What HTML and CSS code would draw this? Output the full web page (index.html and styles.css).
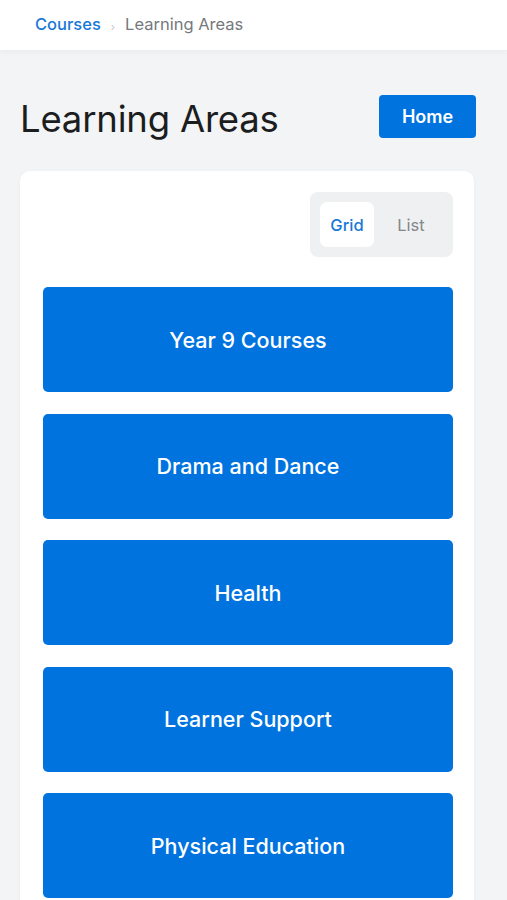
FILE: index.html
```html
<!DOCTYPE html>
<html lang="en">
<head>
  <meta charset="UTF-8" />
  <meta name="viewport" content="width=device-width, initial-scale=1.0"/>
  <title>Learning Areas</title>
  <link rel="stylesheet" href="styles.css">
</head>
<body>
  <header class="topbar">
    <nav class="crumbs">
      <a class="crumb-link" href="#">Courses</a>
      <span class="crumb-sep">›</span>
      <span class="crumb-current">Learning Areas</span>
    </nav>
  </header>

  <main class="page">
    <div class="page-head">
      <h1 class="title">Learning Areas</h1>
      <button class="home-btn">Home</button>
    </div>

    <section class="card">
      <div class="toolbar">
        <div class="toggle">
          <button class="toggle-btn active">Grid</button>
          <button class="toggle-btn">List</button>
        </div>
      </div>

      <div class="tiles">
        <a class="tile" href="#">Year 9 Courses</a>
        <a class="tile" href="#">Drama and Dance</a>
        <a class="tile" href="#">Health</a>
        <a class="tile" href="#">Learner Support</a>
        <a class="tile" href="#">Physical Education</a>
      </div>
    </section>
  </main>
</body>
</html>
```

FILE: styles.css
```css
* {
  margin: 0;
  padding: 0;
  box-sizing: border-box;
  font-family: Inter, 'Liberation Sans', sans-serif;
}

body {
  background: #f3f4f6;
  color: #1d1f21;
  overflow: hidden;
}

.topbar {
  height: 51px;
  background: #fff;
  border-bottom: 1px solid #eceef0;
  box-shadow: 0 2px 6px rgba(0, 0, 0, 0.03);
  display: flex;
  align-items: center;
  padding: 0 35px;
}

.crumbs {
  display: flex;
  align-items: center;
  gap: 10px;
  font-size: 16.5px;
  padding-bottom: 2px;
}

.crumb-link {
  color: #1a78d6;
  text-decoration: none;
  font-weight: 500;
}

.crumb-sep {
  color: #c4c7cb;
  font-size: 11px;
  padding-top: 6px;
}

.crumb-current {
  color: #75787c;
}

.page {
  padding: 41px 31px 0 20px;
}

.page-head {
  display: flex;
  justify-content: space-between;
  align-items: center;
  margin-bottom: 30px;
}

.title {
  font-size: 36.5px;
  font-weight: 400;
  letter-spacing: -0.2px;
  color: #1b1d1f;
  padding-top: 5px;
}

.home-btn {
  width: 97px;
  height: 43px;
  border: none;
  border-radius: 4px;
  background: #0073df;
  color: #fff;
  font-size: 18px;
  font-weight: 600;
  cursor: pointer;
}

.card {
  background: #fff;
  border-radius: 10px;
  box-shadow: 0 1px 4px rgba(0, 0, 0, 0.04);
  margin-right: 2px;
  padding: 21px 21px 20px 23px;
}

.toolbar {
  display: flex;
  justify-content: flex-end;
  margin-bottom: 30px;
}

.toggle {
  display: flex;
  align-items: center;
  gap: 10px;
  width: 143px;
  height: 65px;
  padding: 10px;
  background: #eef0f2;
  border-radius: 8px;
}

.toggle-btn {
  border: none;
  background: transparent;
  height: 45px;
  width: 54px;
  border-radius: 7px;
  font-size: 16.5px;
  color: #84878b;
  cursor: pointer;
}

.toggle-btn.active {
  background: #fff;
  color: #1a78d6;
  font-weight: 500;
}

.tiles {
  display: flex;
  flex-direction: column;
  gap: 21.5px;
}

.tile {
  height: 105px;
  display: flex;
  justify-content: center;
  align-items: center;
  background: #0073df;
  border-radius: 5px;
  color: #fff;
  font-size: 21.5px;
  font-weight: 500;
  text-decoration: none;
}
```
